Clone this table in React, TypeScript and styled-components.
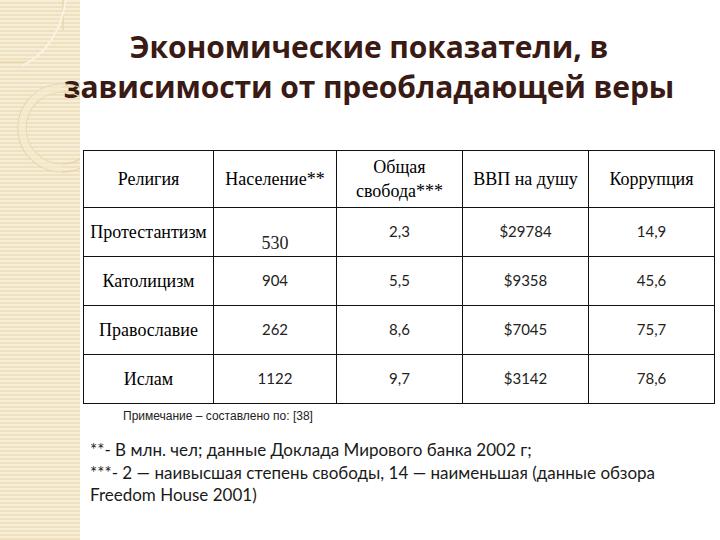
import React from 'react';
import styled, { createGlobalStyle } from 'styled-components';

const GlobalStyle = createGlobalStyle`
  html, body {
    margin: 0;
    padding: 0;
    width: 720px;
    height: 540px;
    overflow: hidden;
    background-color: #ffffff;
  }
  body {
    background-image: repeating-linear-gradient(
      0deg,
      #efe1bf 0px,
      #efe1bf 2px,
      #f7eed8 2px,
      #f7eed8 4px
    );
    background-size: 80px 100%;
    background-repeat: no-repeat;
  }
`;

const StyledPage = styled.div`
  position: relative;
  width: 720px;
  height: 540px;
  box-sizing: border-box;
  display: flex;
  flex-direction: column;
  padding: 27px 0 0 0;
`;

const StyledDecor = styled.svg`
  position: absolute;
  left: 0;
  top: 0;
  width: 80px;
  height: 200px;
  pointer-events: none;
`;

const StyledTitle = styled.h1`
  margin: 0;
  padding-left: 18px;
  font-family: 'Open Sans', 'Liberation Sans', sans-serif;
  font-weight: 700;
  font-size: 30px;
  line-height: 40px;
  letter-spacing: -0.1px;
  color: #3a1a14;
  text-align: center;
`;

const StyledTable = styled.table`
  margin: 43px 0 0 83px;
  width: 631px;
  border-collapse: collapse;
  table-layout: fixed;
  color: #000000;
`;

const StyledHeadCell = styled.th`
  height: 56px;
  padding: 0 2px;
  border: 1.5px solid #111111;
  font-family: 'Liberation Serif', 'DejaVu Serif', serif;
  font-weight: 400;
  font-size: 18px;
  line-height: 24px;
  text-align: center;
  vertical-align: middle;
`;

const StyledRow = styled.tr`
  height: 49px;
`;

const StyledNameCell = styled.td`
  border: 1.5px solid #111111;
  padding: 0;
  font-family: 'Liberation Serif', 'DejaVu Serif', serif;
  font-size: 18px;
  text-align: center;
  vertical-align: middle;
  white-space: nowrap;
`;

const StyledValueCell = styled.td<{ $serif?: boolean }>`
  border: 1.5px solid #111111;
  padding: 0 0 ${({ $serif }) => ($serif ? '2px' : '3px')} 0;
  font-family: ${({ $serif }) =>
    $serif ? "'Liberation Serif', 'DejaVu Serif', serif" : "'Lato', 'Open Sans', sans-serif"};
  font-size: ${({ $serif }) => ($serif ? '18px' : '15px')};
  color: #222222;
  text-align: center;
  vertical-align: ${({ $serif }) => ($serif ? 'bottom' : 'middle')};
`;

const StyledSource = styled.p`
  margin: 5px 0 0 123px;
  font-family: 'Liberation Sans', Arial, sans-serif;
  font-size: 12px;
  color: #222222;
`;

const StyledNotes = styled.div`
  margin: 16px 0 0 90px;
  font-family: 'Lato', 'Open Sans', sans-serif;
  font-size: 17px;
  line-height: 22.5px;
  color: #1a1a1a;
`;

interface IRow {
  name: string;
  population: string;
  freedom: string;
  gdp: string;
  corruption: string;
  serifPopulation?: boolean;
}

const rows: IRow[] = [
  { name: 'Протестантизм', population: '530', freedom: '2,3', gdp: '$29784', corruption: '14,9', serifPopulation: true },
  { name: 'Католицизм', population: '904', freedom: '5,5', gdp: '$9358', corruption: '45,6' },
  { name: 'Православие', population: '262', freedom: '8,6', gdp: '$7045', corruption: '75,7' },
  { name: 'Ислам', population: '1122', freedom: '9,7', gdp: '$3142', corruption: '78,6' },
];

const Decor = (): JSX.Element => (
  <StyledDecor viewBox="0 0 80 200">
    <g fill="none" stroke="#e6d4a6" strokeWidth="1.2">
      <path d="M0 62 H30" />
      <path d="M63 0 V30" />
      <path d="M66 0 Q58 48 22 66" stroke="#f9f3e2" strokeWidth="2" />
      <circle cx="62" cy="128" r="44" />
      <circle cx="62" cy="128" r="36" />
    </g>
    <path d="M62 84 A44 44 0 0 0 62 172 L62 164 A36 36 0 0 1 62 92 Z" fill="#f5ebd1" opacity="0.6" />
  </StyledDecor>
);

const App = (): JSX.Element => {
  return (
    <>
      <GlobalStyle />
      <StyledPage>
        <Decor />
        <StyledTitle>
          Экономические показатели, в
          <br />
          зависимости от преобладающей веры
        </StyledTitle>
        <StyledTable>
          <colgroup>
            <col style={{ width: 130 }} />
            <col style={{ width: 123 }} />
            <col style={{ width: 126 }} />
            <col style={{ width: 126 }} />
            <col style={{ width: 126 }} />
          </colgroup>
          <thead>
            <tr>
              <StyledHeadCell>Религия</StyledHeadCell>
              <StyledHeadCell>Население**</StyledHeadCell>
              <StyledHeadCell>
                Общая
                <br />
                свобода***
              </StyledHeadCell>
              <StyledHeadCell>ВВП на душу</StyledHeadCell>
              <StyledHeadCell>Коррупция</StyledHeadCell>
            </tr>
          </thead>
          <tbody>
            {rows.map((row) => (
              <StyledRow key={row.name}>
                <StyledNameCell>{row.name}</StyledNameCell>
                <StyledValueCell $serif={row.serifPopulation}>{row.population}</StyledValueCell>
                <StyledValueCell>{row.freedom}</StyledValueCell>
                <StyledValueCell>{row.gdp}</StyledValueCell>
                <StyledValueCell>{row.corruption}</StyledValueCell>
              </StyledRow>
            ))}
          </tbody>
        </StyledTable>
        <StyledSource>Примечание – составлено по: [38]</StyledSource>
        <StyledNotes>
          **- В млн. чел; данные Доклада Мирового банка 2002 г;
          <br />
          ***- 2 — наивысшая степень свободы, 14 — наименьшая (данные обзора
          <br />
          Freedom House 2001)
        </StyledNotes>
      </StyledPage>
    </>
  );
};

export default App;
